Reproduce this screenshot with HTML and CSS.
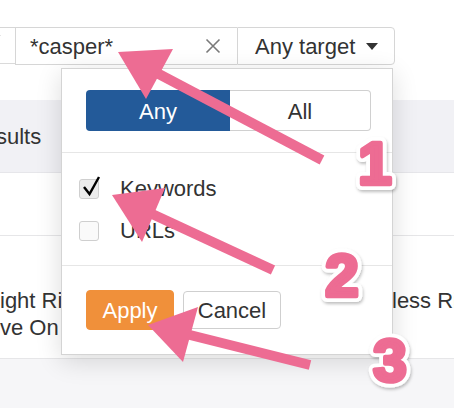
FILE: index.html
```html
<!DOCTYPE html>
<html>
<head>
<meta charset="utf-8">
<link rel="stylesheet" href="styles.css">
</head>
<body>
<div class="page">
  <div class="toolbar">
    <div class="seg-left">
      <svg class="chev" width="12" height="8" viewBox="0 0 12 8"><path d="M1 1 L6 6 L11 1" fill="none" stroke="#999" stroke-width="1.5"/></svg>
    </div>
    <div class="search">
      <span class="query">*casper*</span>
      <svg class="clear" width="16" height="16" viewBox="0 0 16 16"><path d="M1.5 1.5 L14.5 14.5 M14.5 1.5 L1.5 14.5" stroke="#7a7a7a" stroke-width="1.6" fill="none"/></svg>
    </div>
    <div class="target">Any target <span class="caret"></span></div>
  </div>

  <div class="table">
    <div class="thead"><span class="cell-left">sults</span></div>
    <div class="row row-a"></div>
    <div class="row row-b">
      <div class="cell-left">ight Rider<br>ve On</div>
      <div class="cell-right">less Rider</div>
    </div>
    <div class="foot"></div>
  </div>

  <div class="dropdown">
    <div class="section sec-mode">
      <div class="segmented">
        <div class="seg seg-on">Any</div>
        <div class="seg seg-off">All</div>
      </div>
    </div>
    <div class="section sec-checks">
      <label class="check-row">
        <span class="box checked">
          <svg class="tick" width="24" height="24" viewBox="0 0 24 24"><path d="M5 10 L10.5 17 L20 0" fill="none" stroke="#000" stroke-width="2.4" stroke-linejoin="miter"/></svg>
        </span>
        <span class="check-label">Keywords</span>
      </label>
      <label class="check-row">
        <span class="box"></span>
        <span class="check-label">URLs</span>
      </label>
    </div>
    <div class="section sec-actions">
      <button class="btn btn-apply">Apply</button>
      <button class="btn btn-cancel">Cancel</button>
    </div>
  </div>

  <svg class="annot" width="454" height="408" viewBox="0 0 454 408">
    <defs>
      <filter id="sh" x="-30%" y="-30%" width="160%" height="160%">
        <feDropShadow dx="1" dy="2" stdDeviation="1.5" flood-color="#000" flood-opacity="0.25"/>
      </filter>
    </defs>
    <g fill="#ed6c93" stroke="none">
      <line x1="155" y1="72" x2="322" y2="160" stroke="#ed6c93" stroke-width="10"/>
      <polygon points="118,52 173,49 146,99"/>
      <line x1="150" y1="213" x2="273" y2="270" stroke="#ed6c93" stroke-width="10"/>
      <polygon points="112,195 165,188 142,242"/>
      <line x1="186" y1="334" x2="310" y2="365" stroke="#ed6c93" stroke-width="10"/>
      <polygon points="148,325 198,307 183,362"/>
    </g>
    <g class="nums" filter="url(#sh)">
      <text x="375" y="184" class="num-out">1</text>
      <text x="375" y="184" class="num-in">1</text>
      <text x="342" y="296" class="num-out">2</text>
      <text x="342" y="296" class="num-in">2</text>
      <text x="390" y="381" class="num-out">3</text>
      <text x="390" y="381" class="num-in">3</text>
    </g>
  </svg>
</div>
</body>
</html>
```

FILE: styles.css
```css
html, body {
  margin: 0;
  padding: 0;
  background: #fff;
}

.page {
  position: relative;
  width: 454px;
  height: 408px;
  overflow: hidden;
  background: #fff;
  font-family: "Liberation Sans", Arial, sans-serif;
  font-size: 22px;
  line-height: 26px;
  color: #333;
}

/* toolbar */
.toolbar {
  display: flex;
  height: 38px;
  margin-top: 27px;
  margin-left: -25px;
}

.seg-left {
  width: 40px;
  box-sizing: border-box;
  border: 1px solid #d6d6d6;
  border-right: none;
  border-bottom-color: #dadada;
  height: 37px;
  position: relative;
}

.chev {
  position: absolute;
  left: 13px;
  top: 6px;
}

.search {
  width: 222px;
  box-sizing: border-box;
  border: 1px solid #d6d6d6;
  border-right: none;
  display: flex;
  align-items: center;
  padding: 2px 0 0 14px;
}

.query {
  flex: 1;
}

.clear {
  margin-right: 16px;
  margin-top: -2px;
}

.target {
  width: 158px;
  box-sizing: border-box;
  border: 1px solid #d6d6d6;
  border-radius: 0 4px 4px 0;
  display: flex;
  align-items: center;
  padding: 2px 0 0 17px;
  white-space: pre;
}

.caret {
  width: 0;
  height: 0;
  border-left: 6px solid transparent;
  border-right: 6px solid transparent;
  border-top: 7px solid #333;
  margin-left: 5px;
  margin-top: -2px;
}

/* table behind */
.table {
  display: flex;
  flex-direction: column;
}

.thead {
  margin-top: 35px;
  height: 72px;
  background: #f1f1f5;
  border-bottom: 1px solid #e6e6ea;
  display: flex;
  align-items: center;
}

.thead .cell-left {
  margin-left: -4px;
  padding-top: 1px;
}

.row {
  background: #fff;
  border-bottom: 1px solid #e6e6e8;
}

.row-a {
  height: 62px;
}

.row-b {
  height: 123px;
  display: flex;
  justify-content: space-between;
  line-height: 27px;
  box-sizing: border-box;
  padding-top: 51px;
}

.row-b .cell-left {
  white-space: nowrap;
}

.row-b .cell-right {
  white-space: nowrap;
  width: 62px;
  overflow: hidden;
  padding-left: 0;
}

.foot {
  height: 60px;
  background: #f6f6f8;
}

/* dropdown */
.dropdown {
  position: absolute;
  left: 61px;
  top: 68px;
  width: 332px;
  height: 287px;
  box-sizing: border-box;
  border: 1px solid #d4d4d4;
  background: #fff;
  box-shadow: 0 6px 24px rgba(0, 0, 0, 0.14);
  display: flex;
  flex-direction: column;
}

.section {
  border-bottom: 1px solid #e6e6e6;
}

.section:last-child {
  border-bottom: none;
}

.sec-mode {
  padding: 21px 21px 21px 24px;
}

.segmented {
  display: flex;
  width: 285px;
  height: 41px;
}

.seg {
  display: flex;
  align-items: center;
  justify-content: center;
  box-sizing: border-box;
  padding-top: 2px;
}

.seg-on {
  width: 144px;
  background: #235a99;
  color: #fff;
  border-radius: 4px 0 0 4px;
}

.seg-off {
  flex: 1;
  border: 1px solid #d0d0d0;
  border-left: none;
  border-radius: 0 4px 4px 0;
  background: #fff;
  color: #333;
}

.sec-checks {
  padding: 26px 0 24px 17px;
  display: flex;
  flex-direction: column;
  gap: 22px;
}

.check-row {
  display: flex;
  align-items: center;
  height: 20px;
}

.box {
  position: relative;
  width: 20px;
  height: 20px;
  box-sizing: border-box;
  border: 1px solid #cfcfcf;
  border-radius: 3px;
  background: #fafafa;
}

.box.checked {
  background: #ececec;
}

.tick {
  position: absolute;
  left: -1px;
  top: -3px;
  overflow: visible;
}

.check-label {
  margin-left: 21px;
}

.sec-actions {
  padding: 24px 0 24px 24px;
  display: flex;
  align-items: center;
  gap: 9px;
}

.btn {
  font-family: "Liberation Sans", Arial, sans-serif;
  font-size: 22px;
  line-height: 26px;
  height: 40px;
  box-sizing: border-box;
  border-radius: 4px;
  padding: 2px 0 0;
  margin: 0;
}

.btn-apply {
  width: 88px;
  background: #f0903a;
  border: 1px solid #f0903a;
  color: #fff;
}

.btn-cancel {
  width: 98px;
  height: 38px;
  background: #fff;
  border: 1px solid #cfcfcf;
  color: #333;
}

/* annotations overlay */
.annot {
  position: absolute;
  left: 0;
  top: 0;
  pointer-events: none;
}

.annot text {
  font-family: "Liberation Sans", Arial, sans-serif;
  font-weight: 700;
  font-size: 60px;
  text-anchor: middle;
}

.num-out {
  fill: #fff;
  stroke: #fff;
  stroke-width: 12;
  stroke-linejoin: round;
}

.num-in {
  fill: #ed6c93;
  stroke: #ed6c93;
  stroke-width: 4.5;
  stroke-linejoin: round;
}
```
